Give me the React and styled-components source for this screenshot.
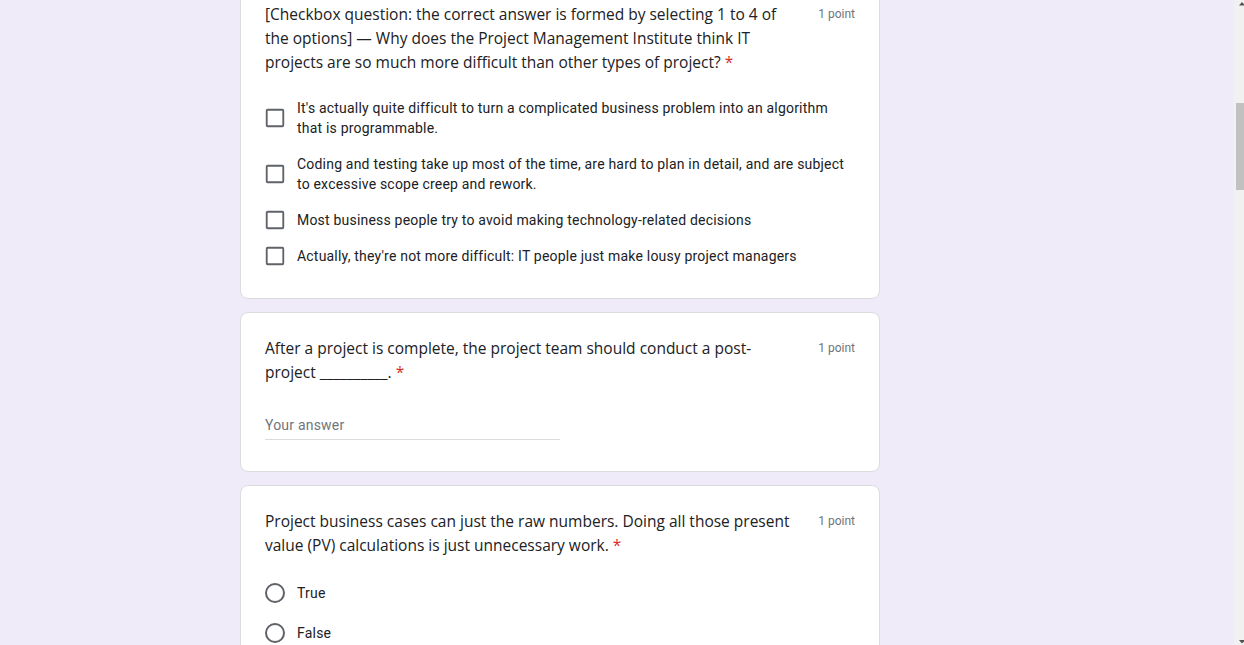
import React, { useEffect, useRef } from "react"
import styled, { createGlobalStyle } from "styled-components"

const GlobalStyle = createGlobalStyle`
  html, body {
    margin: 0;
    padding: 0;
    height: 100%;
    overflow: hidden;
    background: #f0ebf8;
  }
  #root {
    height: 100%;
  }
`

const Shell = styled.div`
  display: flex;
  height: 100vh;
`

const Viewport = styled.div`
  flex: 1;
  overflow: hidden;
  background: #f0ebf8;
`

const ScrollBar = styled.aside`
  flex: none;
  width: 10px;
  display: flex;
  flex-direction: column;
  background: #f1f1f1;
`

const ArrowButton = styled.svg`
  display: block;
  width: 10px;
  height: 15px;
  flex: none;
`

const Track = styled.div`
  flex: 1;
`

const Thumb = styled.div`
  margin: 88px 0 0 2px;
  height: 87px;
  background: #c1c1c1;
`

/* content above the visible cards is scrolled out of view */
const Form = styled.main`
  box-sizing: border-box;
  min-height: 4559px;
  padding: 630px 0 40px 240px;
  display: flex;
  flex-direction: column;
  gap: 13px;
`

const Card = styled.section`
  box-sizing: border-box;
  width: 640px;
  background: #fff;
  border: 1px solid #dadce0;
  border-radius: 8px;
  padding: 23px 24px ${(p) => p.$bottom || 32}px;
`

const Header = styled.div`
  display: flex;
  align-items: flex-start;
  gap: 24px;
  margin-bottom: ${(p) => p.$space}px;
`

const Title = styled.div`
  flex: 1;
  font-family: "Open Sans", "Liberation Sans", sans-serif;
  font-size: 15.5px;
  line-height: 24px;
  color: #202124;
`

const Required = styled.span`
  color: #d93025;
  margin-left: 4px;
`

const Points = styled.div`
  font-family: Roboto, "Liberation Sans", sans-serif;
  font-size: 12px;
  line-height: 24px;
  color: #70757a;
  white-space: nowrap;
`

const Options = styled.div`
  display: flex;
  flex-direction: column;
  gap: ${(p) => p.$gap}px;
`

const Option = styled.label`
  display: flex;
  align-items: center;
  gap: 12px;
  cursor: pointer;
`

const Box = styled.span`
  flex: none;
  box-sizing: border-box;
  width: 20px;
  height: 20px;
  border: 2px solid #5f6368;
  border-radius: ${(p) => (p.$round ? "50%" : "2px")};
  transform: ${(p) => (p.$round ? "none" : "scale(0.92)")};
`

const OptionText = styled.span`
  font-family: Roboto, "Liberation Sans", sans-serif;
  font-size: 14px;
  line-height: 20px;
  letter-spacing: 0.2px;
  color: #202124;
`

const Answer = styled.div`
  box-sizing: border-box;
  width: 295px;
  height: 29px;
  margin-top: 27px;
  padding-top: 4px;
  border-bottom: 1px solid #dadce0;
  font-family: Roboto, "Liberation Sans", sans-serif;
  font-size: 14px;
  line-height: 20px;
  letter-spacing: 0.2px;
  color: #70757a;
`

function Question({ title, space }) {
  return (
    <Header $space={space}>
      <Title>
        {title}
        <Required>*</Required>
      </Title>
      <Points>1 point</Points>
    </Header>
  )
}

const checkboxOptions = [
  "It's actually quite difficult to turn a complicated business problem into an algorithm that is programmable.",
  "Coding and testing take up most of the time, are hard to plan in detail, and are subject to excessive scope creep and rework.",
  "Most business people try to avoid making technology-related decisions",
  "Actually, they're not more difficult: IT people just make lousy project managers",
]

export default function App() {
  const viewport = useRef(null)

  useEffect(() => {
    if (viewport.current) viewport.current.scrollTop = 652
  }, [])

  return (
    <>
      <GlobalStyle />
      <Shell>
        <Viewport ref={viewport}>
          <Form>
            <Card>
              <Question
                space={24}
                title="[Checkbox question: the correct answer is formed by selecting 1 to 4 of the options] — Why does the Project Management Institute think IT projects are so much more difficult than other types of project?"
              />
              <Options $gap={16}>
                {checkboxOptions.map((text) => (
                  <Option key={text}>
                    <Box />
                    <OptionText>{text}</OptionText>
                  </Option>
                ))}
              </Options>
            </Card>

            <Card $bottom={31}>
              <Question
                space={0}
                title="After a project is complete, the project team should conduct a post-project __________."
              />
              <Answer>Your answer</Answer>
            </Card>

            <Card>
              <Question
                space={26}
                title="Project business cases can just the raw numbers. Doing all those present value (PV) calculations is just unnecessary work."
              />
              <Options $gap={20}>
                {["True", "False"].map((text) => (
                  <Option key={text}>
                    <Box $round />
                    <OptionText>{text}</OptionText>
                  </Option>
                ))}
              </Options>
            </Card>
          </Form>
        </Viewport>

        <ScrollBar>
          <ArrowButton viewBox="0 0 10 15">
            <polygon points="5,5.5 8,2 11,5.5" fill="#505050" />
          </ArrowButton>
          <Track>
            <Thumb />
          </Track>
          <ArrowButton viewBox="0 0 10 15">
            <polygon points="5,10 8,13.5 11,10" fill="#505050" />
          </ArrowButton>
        </ScrollBar>
      </Shell>
    </>
  )
}
